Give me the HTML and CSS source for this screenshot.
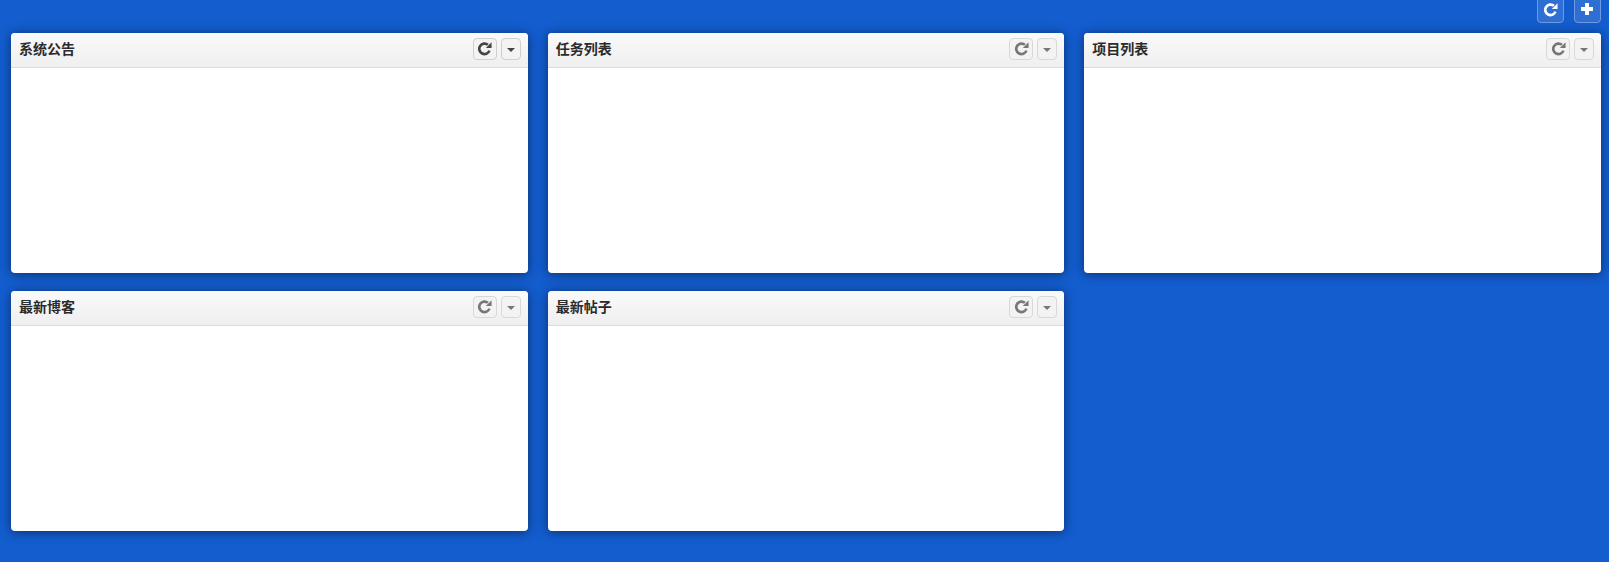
FILE: index.html
```html
<!DOCTYPE html>
<html lang="zh-CN">
<head>
    <meta charset="UTF-8">
    <title>系统面板</title>
    <link rel="stylesheet" href="styles.css">
</head>
<body>
    <svg class="icon-defs" width="0" height="0">
        <symbol id="icon-refresh" viewBox="0 0 14 14">
            <path d="M11.6 9A4.9 4.9 0 1 1 10.2 3.6" fill="none" stroke="currentColor" stroke-width="2.5"/>
            <path d="M8.2 6.6h5.4V1.2z" fill="currentColor"/>
        </symbol>
    </svg>

    <div class="toolbar">
        <button class="tool-btn"><svg class="icon"><use href="#icon-refresh"/></svg></button>
        <button class="tool-btn"><span class="plus"></span></button>
    </div>

    <div class="board">
        <div class="panel">
            <div class="panel-head">
                <h3>系统公告</h3>
                <button class="head-btn head-refresh is-dark"><svg class="icon"><use href="#icon-refresh"/></svg></button>
                <button class="head-btn head-menu is-dark"><span class="caret"></span></button>
            </div>
            <div class="panel-body"></div>
        </div>
        <div class="panel">
            <div class="panel-head">
                <h3>任务列表</h3>
                <button class="head-btn head-refresh"><svg class="icon"><use href="#icon-refresh"/></svg></button>
                <button class="head-btn head-menu"><span class="caret"></span></button>
            </div>
            <div class="panel-body"></div>
        </div>
        <div class="panel">
            <div class="panel-head">
                <h3>项目列表</h3>
                <button class="head-btn head-refresh"><svg class="icon"><use href="#icon-refresh"/></svg></button>
                <button class="head-btn head-menu"><span class="caret"></span></button>
            </div>
            <div class="panel-body"></div>
        </div>
        <div class="panel">
            <div class="panel-head">
                <h3>最新博客</h3>
                <button class="head-btn head-refresh"><svg class="icon"><use href="#icon-refresh"/></svg></button>
                <button class="head-btn head-menu"><span class="caret"></span></button>
            </div>
            <div class="panel-body"></div>
        </div>
        <div class="panel">
            <div class="panel-head">
                <h3>最新帖子</h3>
                <button class="head-btn head-refresh"><svg class="icon"><use href="#icon-refresh"/></svg></button>
                <button class="head-btn head-menu"><span class="caret"></span></button>
            </div>
            <div class="panel-body"></div>
        </div>
    </div>
</body>
</html>
```

FILE: styles.css
```css
html, body {
    height: 100%;
}
body {
    margin: 0;
    background-color: #135dcf;
    font-family: "Liberation Sans", "Noto Sans CJK SC", sans-serif;
    color: #333;
    overflow: hidden;
}
.icon-defs {
    position: absolute;
}
.toolbar {
    height: 23px;
    padding-right: 8px;
    display: flex;
    justify-content: flex-end;
    align-items: flex-end;
    gap: 10px;
    overflow: hidden;
}
.tool-btn {
    width: 27px;
    height: 30px;
    flex: none;
    padding: 0 0 5px;
    display: flex;
    align-items: flex-end;
    justify-content: center;
    background-color: #2f6ed3;
    border: 1px solid #6d9ae3;
    border-radius: 4px;
    color: #fff;
}
.tool-btn .icon {
    width: 15px;
    height: 15px;
}
.plus {
    width: 12px;
    height: 12px;
    margin: 0 1px 2px 0;
    background:
        linear-gradient(#fff, #fff) center / 12px 4px no-repeat,
        linear-gradient(#fff, #fff) center / 4px 12px no-repeat;
}
.board {
    margin-top: 10px;
    padding: 0 8px 0 11px;
    display: grid;
    grid-template-columns: repeat(3, 1fr);
    grid-template-rows: 240px 240px;
    column-gap: 20px;
    row-gap: 18px;
}
.panel {
    display: flex;
    flex-direction: column;
    background-color: #fff;
    border-radius: 4px;
    box-shadow: 0 1px 11px rgba(0, 0, 0, 0.5);
    overflow: hidden;
}
.panel-head {
    height: 32px;
    padding: 0 7px 2px 8px;
    flex: none;
    display: flex;
    align-items: center;
    gap: 4px;
    background-image: linear-gradient(#fafafa, #efefef);
    border-bottom: 1px solid #dcdcdc;
}
.panel-head h3 {
    margin: 0;
    flex: 1;
    font-size: 14px;
    font-weight: bold;
    line-height: 18px;
    color: #2b2b2b;
}
.panel-body {
    flex: 1;
}
.head-btn {
    height: 22px;
    padding: 0;
    display: flex;
    align-items: center;
    justify-content: center;
    background-color: #f3f3f3;
    border: 1px solid #d8d8d8;
    border-radius: 4px;
    color: #777;
}
.head-refresh {
    width: 24px;
}
.head-menu {
    width: 20px;
}
.head-btn.is-dark {
    border-color: #cfcfcf;
    color: #444;
}
.head-btn .icon {
    width: 15px;
    height: 15px;
    margin-bottom: 2px;
}
.caret {
    width: 0;
    height: 0;
    margin-top: 2px;
    border-left: 4px solid transparent;
    border-right: 4px solid transparent;
    border-top: 4px solid currentColor;
}
```
